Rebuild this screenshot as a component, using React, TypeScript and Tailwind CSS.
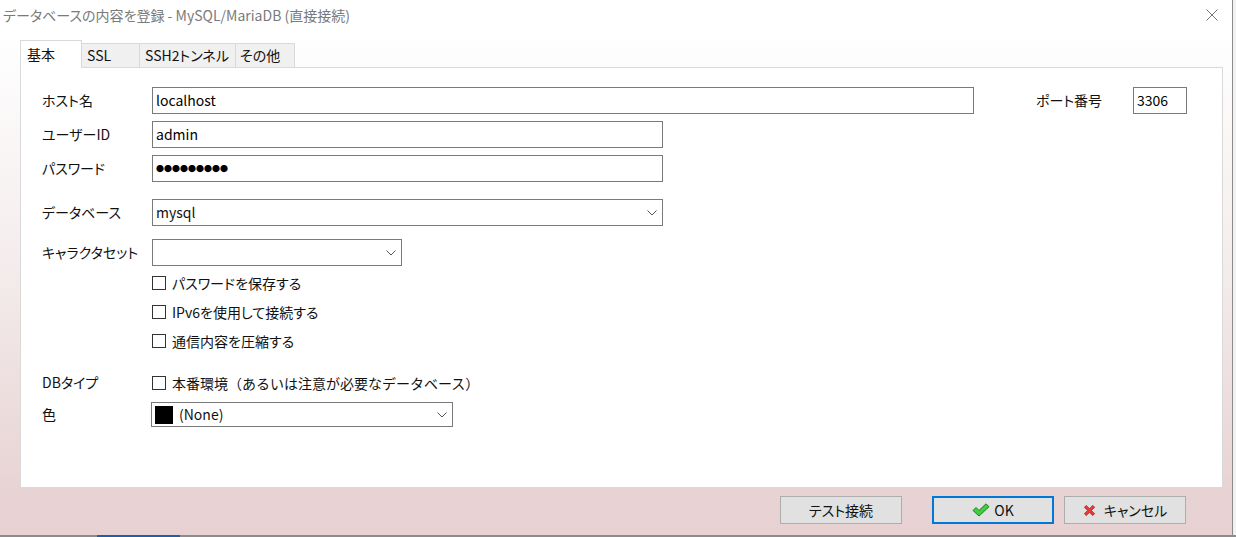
import React from 'react';

const font = "font-['Noto_Sans_CJK_JP','Noto_Sans',sans-serif]";

const Chevron = () => (
  <svg width="10" height="6" viewBox="0 0 10 6" className="shrink-0">
    <path d="M0.5 0.5 L5 5 L9.5 0.5" fill="none" stroke="#555" strokeWidth="1" />
  </svg>
);

const TextBox: React.FC<{ w: string; children?: React.ReactNode }> = ({ w, children }) => (
  <div className={`${w} flex h-[27px] items-center border border-[#7a7a7a] bg-white pl-[3px] text-[14px] text-black`}>
    {children}
  </div>
);

const Select: React.FC<{ w: string; h?: string; children?: React.ReactNode }> = ({ w, h = 'h-[27px]', children }) => (
  <div className={`${w} ${h} flex items-center border border-[#7a7a7a] bg-white pl-[3px] pr-[5px] text-[14px]`}>
    <div className="flex flex-1 items-center">{children}</div>
    <Chevron />
  </div>
);

const Check: React.FC<{ label: string; wide?: boolean }> = ({ label, wide }) => (
  <div className="flex items-center gap-[6px] whitespace-nowrap">
    <div className="h-[14px] w-[14px] border border-[#333] bg-white" />
    <span className={`text-[14px] leading-none ${wide ? '[font-feature-settings:normal]' : ''}`}>{label}</span>
  </div>
);

const Row: React.FC<{ label: string; className?: string; children?: React.ReactNode }> = ({ label, className = '', children }) => (
  <div className={`flex items-center ${className}`}>
    <div className="w-[110px] shrink-0 whitespace-nowrap text-[14px]">{label}</div>
    {children}
  </div>
);

const CheckIcon = () => (
  <svg width="18" height="14" viewBox="0 0 18 14">
    <path d="M1 7.5 L4 4.5 L7 7.5 L14 0.8 L17 3.8 L7 13 Z" fill="#3fcf3f" stroke="#1e7d1e" strokeWidth="1" strokeLinejoin="round" />
  </svg>
);

const CrossIcon = () => (
  <svg width="13" height="13" viewBox="0 0 14 14">
    <path d="M1.5 3.5 L3.5 1.5 L7 5 L10.5 1.5 L12.5 3.5 L9 7 L12.5 10.5 L10.5 12.5 L7 9 L3.5 12.5 L1.5 10.5 L5 7 Z" fill="#ea3b3b" stroke="#a31515" strokeWidth="0.8" strokeLinejoin="round" />
  </svg>
);

const Button: React.FC<{ primary?: boolean; children?: React.ReactNode }> = ({ primary, children }) => (
  <div
    className={`flex h-[28px] w-[122px] items-center justify-center gap-[4px] whitespace-nowrap bg-[#e1e1e1] text-[14px] ${
      primary ? 'border-2 border-[#0078d7]' : 'border border-[#adadad]'
    }`}
  >
    {children}
  </div>
);

const tab = 'flex h-[24px] items-center whitespace-nowrap border border-l-0 border-b-0 border-[#d9d9d9] bg-[#f0f0f0] text-[14px]';

export default function App() {
  return (
    <div className={`flex h-[537px] w-[1236px] flex-col overflow-hidden ${font} text-[#111] [font-feature-settings:'palt']`}>
      <div className="flex flex-1">
        <div className="flex w-[1233px] flex-col border-r border-[#8a8a8a] bg-[linear-gradient(to_bottom,#ffffff_0%,#ffffff_6%,#f4ecec_50%,#e8d3d4_92%,#e7d1d3_100%)]">
          {/* title bar */}
          <div className="flex h-[30px] items-center justify-between pl-[3px] pr-[14px]">
            <span className="whitespace-nowrap text-[14px] text-[#7a7a7a]">データベースの内容を登録 - MySQL/MariaDB (直接接続)</span>
            <svg width="12" height="12" viewBox="0 0 12 12">
              <path d="M0.5 0.5 L11.5 11.5 M11.5 0.5 L0.5 11.5" stroke="#777" strokeWidth="1" />
            </svg>
          </div>

          {/* tabs */}
          <div className="mt-[10px] flex h-[27px] items-end pl-[20px]">
            <div className="relative z-10 -mb-px flex h-[28px] w-[62px] items-center border border-b-0 border-[#d9d9d9] bg-white pl-[6px] text-[14px]">
              基本
            </div>
            <div className={`${tab} w-[58px] pl-[5px]`}>SSL</div>
            <div className={`${tab} w-[96px] pl-[5px]`}>SSH2トンネル</div>
            <div className={`${tab} w-[59px] pl-[4px]`}>その他</div>
          </div>

          {/* panel */}
          <div className="ml-[20px] flex h-[421px] w-[1203px] flex-col border border-[#d9d9d9] bg-white pl-[21px] pt-[19px]">
            <div className="flex items-center">
              <Row label="ホスト名">
                <TextBox w="w-[822px]">localhost</TextBox>
              </Row>
              <div className="ml-[62px] w-[97px] whitespace-nowrap text-[14px]">ポート番号</div>
              <TextBox w="w-[54px]">3306</TextBox>
            </div>
            <Row label="ユーザーID" className="mt-[7px]">
              <TextBox w="w-[511px]">admin</TextBox>
            </Row>
            <Row label="パスワード" className="mt-[7px]">
              <TextBox w="w-[511px]">
                <span className="font-['Noto_Sans_CJK_JP',sans-serif] text-[8px] leading-none [font-feature-settings:normal]">●●●●●●●●●</span>
              </TextBox>
            </Row>
            <Row label="データベース" className="mt-[17px]">
              <Select w="w-[511px]">mysql</Select>
            </Row>
            <Row label="キャラクタセット" className="mt-[13px]">
              <Select w="w-[250px]" />
            </Row>
            <div className="ml-[110px] mt-[10px] flex flex-col gap-[15px]">
              <Check label="パスワードを保存する" />
              <Check label="IPv6を使用して接続する" />
              <Check label="通信内容を圧縮する" />
            </div>
            <Row label="DBタイプ" className="mt-[24px]">
              <Check wide label="本番環境（あるいは注意が必要なデータベース）" />
            </Row>
            <Row label="色" className="mt-[9px]">
              <div className="-ml-px">
                <Select w="w-[302px]" h="h-[25px]">
                  <div className="mr-[6px] h-[18px] w-[18px] bg-black" />
                  <span>(None)</span>
                </Select>
              </div>
            </Row>
          </div>

          {/* buttons */}
          <div className="mt-[8px] flex justify-end pr-[46px]">
            <Button>テスト接続</Button>
            <div className="ml-[30px]">
              <Button primary>
                <CheckIcon />
                <span>OK</span>
              </Button>
            </div>
            <div className="ml-[10px]">
              <Button>
                <CrossIcon />
                <span className="ml-[4px]">キャンセル</span>
              </Button>
            </div>
          </div>
        </div>
        <div className="w-[3px] bg-[#f2f2f2]" />
      </div>
      <div className="flex h-[2px] bg-[#8c8c8c]">
        <div className="w-[97px]" />
        <div className="w-[83px] bg-[#1f5fa8]" />
      </div>
    </div>
  );
}
